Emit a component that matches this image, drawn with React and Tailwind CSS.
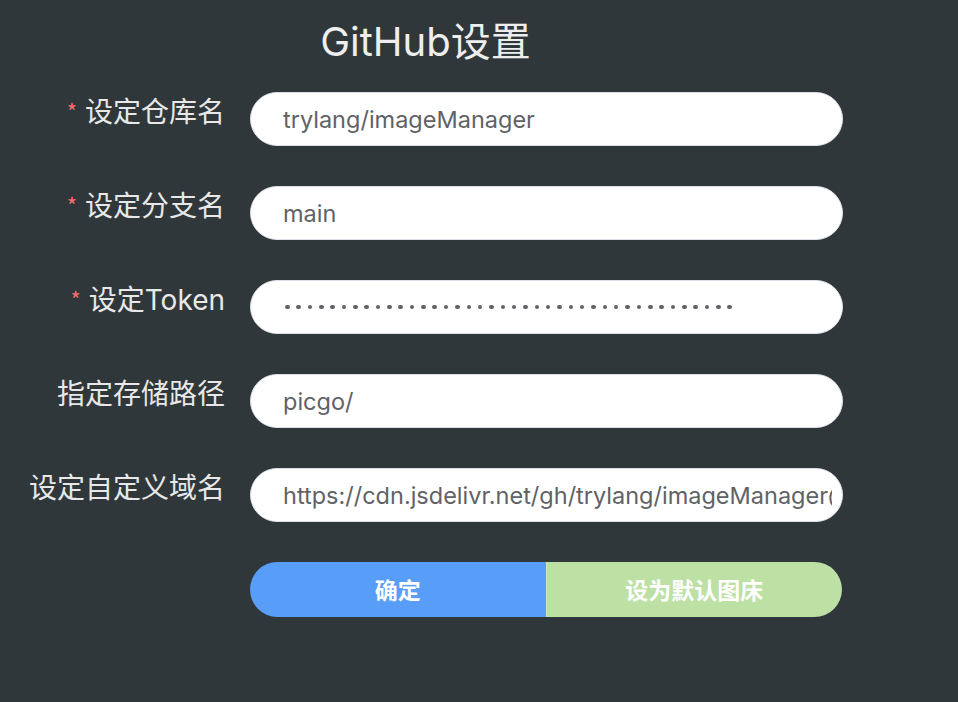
import React from "react";

function Row({ label, required, children }) {
  return (
    <>
      <div className="flex items-start justify-end font-['Noto_Sans_CJK_SC',sans-serif] text-[28px] leading-[36px] text-[#e8e8e8]">
        {required && <span className="mr-[8px] text-[22px] text-[#f56c6c]">*</span>}
        <span>{label}</span>
      </div>
      <div>{children}</div>
    </>
  );
}

function Field({ value }) {
  return (
    <input
      readOnly
      type="text"
      value={value}
      className="block h-[54px] w-[593px] rounded-full border border-[#dcdfe6] bg-white pl-[32px] pr-[10px] font-['Inter',sans-serif] text-[23.5px] text-[#606266] outline-none"
    />
  );
}

function Password({ count }) {
  return (
    <div className="flex h-[54px] w-[593px] items-center gap-[6.85px] rounded-full border border-[#dcdfe6] bg-white pl-[34px]">
      {Array.from({ length: count }).map((_, i) => (
        <span key={i} className="h-[4.5px] w-[4.5px] shrink-0 rounded-full bg-[#606266]" />
      ))}
    </div>
  );
}

export default function App() {
  return (
    <div className="min-h-[702px] w-full bg-[#2f373a] pt-[14px]">
      <div className="flex w-[851px] justify-center">
        <h1 className="font-['Inter','Noto_Sans_CJK_SC',sans-serif] text-[40px] leading-[50px] text-[#eeeeee]">
          GitHub<span className="font-['Noto_Sans_CJK_SC',sans-serif]">设置</span>
        </h1>
      </div>
      <div className="mt-[25px] grid grid-cols-[225px_593px] gap-x-[25px] gap-y-[40px]">
        <Row label="设定仓库名" required>
          <Field value="trylang/imageManager" />
        </Row>
        <Row label="设定分支名" required>
          <Field value="main" />
        </Row>
        <Row
          label={
            <span>
              设定<span className="font-['Inter',sans-serif]">Token</span>
            </span>
          }
          required
        >
          <Password count={40} />
        </Row>
        <Row label="指定存储路径">
          <Field value="picgo/" />
        </Row>
        <Row label="设定自定义域名">
          <Field value="https://cdn.jsdelivr.net/gh/trylang/imageManager@main/" />
        </Row>
        <div />
        <div className="flex h-[55px] w-[592px] overflow-hidden rounded-full font-['Noto_Sans_CJK_SC',sans-serif]">
          <button className="flex flex-1 items-center justify-center border-r border-[#cfe6c0] bg-[#589ef8] text-[23px] font-bold text-white">
            确定
          </button>
          <button className="flex flex-1 items-center justify-center bg-[#bde0a5] text-[23px] font-bold text-white">
            设为默认图床
          </button>
        </div>
      </div>
    </div>
  );
}
